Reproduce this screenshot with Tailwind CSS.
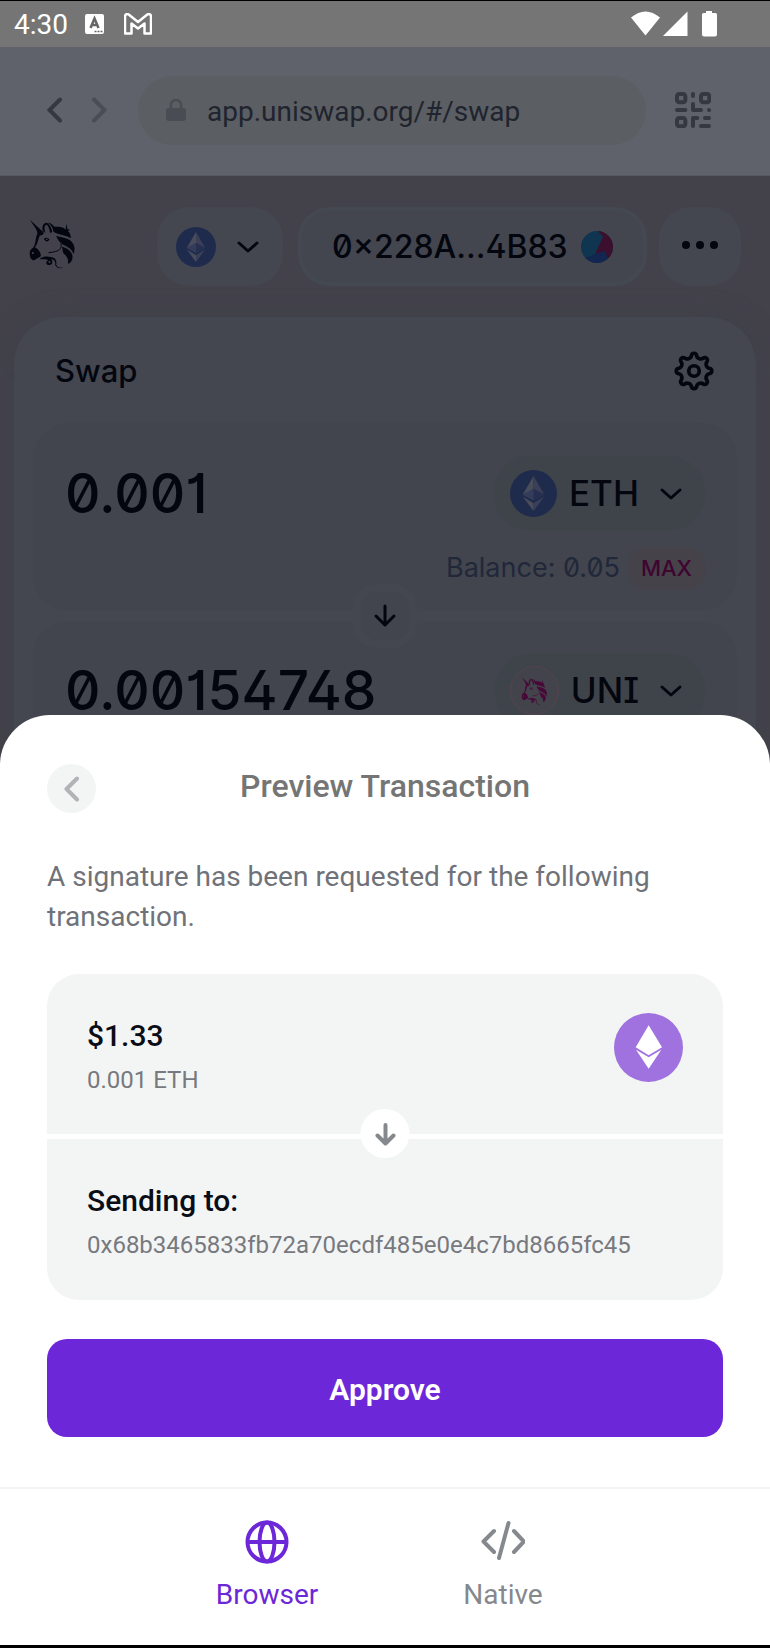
<!DOCTYPE html>
<html lang="en">
<head>
<meta charset="utf-8">
<meta name="viewport" content="width=device-width, initial-scale=1">
<title>Preview Transaction</title>
<script src="https://cdn.jsdelivr.net/npm/@tailwindcss/browser@4"></script>
</head>
<body class="bg-black font-[Roboto,sans-serif]">

<svg class="hidden" aria-hidden="true">
  <symbol id="unicorn" viewBox="88 116 140 150">
    <path fill="currentColor" d="M90 118L131 156Q134 160 127 164L119 166L113 161Q113 153 108 145Z"/>
    <path fill="currentColor" d="M129 152C125 139 131 127 140 127C150 131 156 143 157 155L151 158C149 145 145 134 139 133C134 135 132 144 137 158Z"/>
    <path fill="currentColor" d="M112 160L120 166C115 175 114 190 105 201C112 203 124 215 123 228L103 240C96 241 90 233 90 222C88 212 94 205 100 202C108 191 107 173 112 160Z"/>
    <path fill="currentColor" d="M132 176Q140 168 149 177Q147 185 138 183Z"/>
    <path fill="currentColor" d="M144 127C155 127 159 135 164 139C174 139 190 138 197 148L200 130L203 147L211 148L204 152C211 157 213 165 213 174C199 163 178 165 161 154C159 142 153 131 144 127Z"/>
    <path fill="currentColor" d="M169 166C184 172 210 171 220 190C226 201 225 210 221 222C218 206 205 200 190 193C180 187 173 178 169 166Z"/>
    <path fill="currentColor" d="M187 199C200 202 219 214 218 230C218 240 212 249 204 250C207 239 202 228 192 220C188 214 188 207 187 199Z"/>
    <path fill="none" stroke="currentColor" stroke-width="3" d="M183 190C187 204 181 214 146 217"/>
    <path fill="currentColor" d="M119 236C132 227 145 228 156 231C169 233 171 244 169 253C173 262 182 264 190 260C183 267 170 264 166 253C168 242 162 238 154 237C162 245 156 256 145 254C136 251 139 240 146 240C137 234 128 238 119 236Z"/>
    <circle cx="149" cy="245" r="3" fill="#43464e"/>
    <circle cx="99" cy="218" r="3" fill="#43464e"/><circle cx="141" cy="177" r="2" fill="#66696f"/>
  </symbol>
  <symbol id="eth" viewBox="0 0 48 48">
    <circle cx="24" cy="24" r="24" fill="#1f2b4c"/>
    <path fill="#494c59" d="M24 6L13 25L24 31Z"/><path fill="#3b4058" d="M24 6L35 25L24 31Z"/>
    <path fill="#343c5b" d="M13 25L24 19V31Z"/><path fill="#262f50" d="M24 19L35 25L24 31Z"/>
    <path fill="#494c59" d="M13 27L24 34V42Z"/><path fill="#3b4058" d="M35 27L24 34V42Z"/>
  </symbol>
  <symbol id="chevron" viewBox="0 0 24 16">
    <path fill="none" stroke="currentColor" stroke-width="3" stroke-linecap="round" stroke-linejoin="round" d="M3 4L12 12L21 4"/>
  </symbol>
</svg>

<div class="flex flex-col overflow-hidden pt-px pb-1">

  <div class="flex h-[46px] items-center bg-[#757575] pr-[53px] pl-[14px] text-white">
    <span class="pt-0.5 text-[28px] leading-none">4:30</span>
    <svg class="ml-[17px] h-5 w-[19px]" viewBox="0 0 19 20">
      <rect width="19" height="20" rx="2" fill="#fff"/>
      <path d="M5.500 14L9.500 4.500L13.500 14M7 11H12" fill="none" stroke="#666" stroke-width="2.500"/>
      <path d="M9.500 17.500h2m1 0h2m1 0h2" stroke="#666" stroke-width="1.500"/>
    </svg>
    <svg class="ml-5 h-[22px] w-7" viewBox="0 0 28 22">
      <path d="M1 3.500C1 1 3.500 0.500 5 1.800L14 9L23 1.800C24.500 0.500 27 1 27 3.500V20.500H20.500V10.500L14 15.500L7.500 10.500V20.500H1Z" fill="none" stroke="#fff" stroke-width="2.500" stroke-linejoin="round"/>
    </svg>
    <svg class="ml-auto h-[26px] w-[86px]" viewBox="0 0 86 26" fill="#fff">
      <path d="M0 6.500Q14.500 -5.500 29 6.500L14.500 24.500Z"/>
      <path d="M32 25L56.500 .500V25Z"/>
      <path d="M75 0h6v2h3.500q1.500 0 1.500 1.500v20q0 2-2 2H73q-2 0-2-2v-20Q71 2 72.500 2H75Z"/>
    </svg>
  </div>

  <header class="flex h-[129px] items-center border-b border-[#57595f] bg-[#5f626a] pr-[59px] pb-0.5 pl-[47px] text-[#35383f]">
    <button aria-label="Back"><svg class="block h-[26px] w-4" viewBox="0 0 16 26"><path d="M13 2.500L2.500 13L13 23.500" fill="none" stroke="#35383f" stroke-width="4" stroke-linecap="round"/></svg></button>
    <button aria-label="Forward" class="ml-7"><svg class="block h-[26px] w-4" viewBox="0 0 16 26"><path d="M3 2.500L13.500 13L3 23.500" fill="none" stroke="#4a4d54" stroke-width="4" stroke-linecap="round"/></svg></button>
    <div class="ml-[31px] flex h-[69px] min-w-0 flex-1 items-center rounded-full bg-[#5b5e62] pr-6 pl-7">
      <svg class="h-[22px] w-5 shrink-0" viewBox="0 0 20 22"><path d="M5 10V6a5 5 0 0 1 10 0v4" fill="none" stroke="#494c53" stroke-width="2.500"/><rect y="9" width="20" height="13" rx="3" fill="#494c53"/></svg>
      <input aria-label="Address" value="app.uniswap.org/#/swap" class="ml-[21px] w-full min-w-0 bg-transparent pt-1 text-[28px] text-[#20242e] outline-none">
    </div>
    <button aria-label="Scan code" class="ml-[29px]">
      <svg class="block size-9" viewBox="870 276 108 108" fill="none" stroke="#35383f" stroke-width="12" stroke-linecap="round" stroke-linejoin="round">
        <rect x="876" y="282" width="25" height="25" rx="7"/><rect x="948" y="282" width="25" height="25" rx="7"/><rect x="876" y="354" width="25" height="25" rx="7"/>
        <path d="M924 282v6M924 312v18h24M876 330h25M972 330h.1M924 378v-24h13M960 354h12M948 378h24"/>
      </svg>
    </button>
  </header>

  <main class="bg-[#43424b] px-[14px] pt-[31px] font-[Inter,sans-serif] text-[#03060f] [font-feature-settings:'zero','cv01','cv02','cv08','calt']">
    <div class="flex h-[79px] items-center pr-[15px] pl-[15px]">
      <a href="#" aria-label="Uniswap" class="pb-1.5"><svg class="block h-[50px] w-[47px]"><use href="#unicorn"/></svg></a>
      <button aria-label="Network" class="ml-auto flex h-full w-[126px] items-center rounded-[32px] bg-[#44474f] pl-[19px]">
        <svg class="size-10"><use href="#eth"/></svg>
        <svg class="ml-5 h-4 w-6"><use href="#chevron"/></svg>
      </button>
      <button class="ml-[15px] flex h-full w-[349px] items-center rounded-[32px] border-4 border-[#444850] bg-[#43464e] pl-[30px] text-[32px] font-medium">
        <span>0×228A...4B83</span>
        <svg class="ml-auto mr-[30px] size-8" viewBox="0 0 32 32">
          <defs><clipPath id="av"><circle cx="16" cy="16" r="16"/></clipPath></defs>
          <g clip-path="url(#av)"><path fill="#0f3551" d="M0 0h32v32H0z"/><path fill="#3b0f2d" d="M17 0L22 6L14 23L24 21L28 32H32V0Z"/><path fill="#13264f" d="M2 28L14 23L24 20L27 28L20 32H5Z"/></g>
        </svg>
      </button>
      <button aria-label="More" class="ml-3 flex h-full w-[82px] items-center justify-center rounded-[32px] bg-[#44474f]">
        <svg class="h-4 w-9" viewBox="0 0 36 16" fill="currentColor"><circle cx="4" cy="6" r="4"/><circle cx="18" cy="6" r="4"/><circle cx="32" cy="6" r="4"/></svg>
      </button>
    </div>

    <section class="mt-[31px] rounded-t-[48px] bg-[#44474f] px-[19px] shadow-[0_0_24px_#3f4048]">
      <div class="flex h-[106px] items-center justify-between px-[22px] pt-0.5">
        <h1 class="text-[31px] font-medium">Swap</h1>
        <button aria-label="Settings">
          <svg class="block size-[42px]" viewBox="-20 -20 40 40" fill="none" stroke="currentColor" stroke-width="3.500">
            <circle r="5"/>
            <path stroke-linejoin="round" d="M15.100 -2.400A2.500 2.500 0 0 1 15.100 2.400A4.100 4.100 0 0 0 12.400 9A2.500 2.500 0 0 1 9 12.400A4.100 4.100 0 0 0 2.400 15.100A2.500 2.500 0 0 1 -2.400 15.100A4.100 4.100 0 0 0 -9 12.400A2.500 2.500 0 0 1 -12.400 9A4.100 4.100 0 0 0 -15.100 2.400A2.500 2.500 0 0 1 -15.100 -2.400A4.100 4.100 0 0 0 -12.400 -9A2.500 2.500 0 0 1 -9 -12.400A4.100 4.100 0 0 0 -2.400 -15.100A2.500 2.500 0 0 1 2.400 -15.100A4.100 4.100 0 0 0 9 -12.400A2.500 2.500 0 0 1 12.400 -9A4.100 4.100 0 0 0 15.100 -2.400Z"/>
          </svg>
        </button>
      </div>

      <div class="relative">
        <div class="h-[188px] rounded-[36px] bg-[#42454d] pt-[33px] pr-8 pl-8">
          <div class="flex items-center">
            <input aria-label="Amount to pay" value="0.001" class="w-0 min-w-0 flex-1 bg-transparent text-[55px] leading-[75px] font-medium outline-none">
            <button class="flex h-[75px] items-center rounded-[36px] bg-[#3f444b] pr-[22px] pl-4 text-[35px] font-medium">
              <svg class="size-[47px]"><use href="#eth"/></svg>
              <span class="ml-3">ETH</span>
              <svg class="ml-5 h-4 w-6"><use href="#chevron"/></svg>
            </button>
          </div>
          <div class="mt-4 flex items-center justify-end">
            <span class="text-[27px] text-[#21283a]">Balance: 0.05</span>
            <button class="ml-2 h-[43px] rounded-[20px] bg-[#454249] px-[13px] text-[22px] font-medium text-[#3f0430]">MAX</button>
          </div>
        </div>
        <button aria-label="Switch tokens" class="absolute top-[161px] left-1/2 flex size-16 -translate-x-1/2 items-center justify-center rounded-[24px] border-8 border-[#44474f] bg-[#42454d]">
          <svg class="size-6" viewBox="0 0 24 24"><path d="M12 2V21M3 12L12 21L21 12" fill="none" stroke="currentColor" stroke-width="3" stroke-linecap="round" stroke-linejoin="round"/></svg>
        </button>
        <div class="mt-[10px] h-[144px] rounded-t-[36px] bg-[#42454d] px-8 pt-8">
          <div class="flex items-center">
            <input aria-label="Amount to receive" value="0.00154748" class="w-0 min-w-0 flex-1 bg-transparent text-[55px] leading-[75px] font-medium outline-none">
            <button class="flex h-[75px] items-center rounded-[36px] bg-[#3f444b] pr-[22px] pl-[15px] text-[35px] font-medium">
              <span class="flex size-[49px] items-center justify-center rounded-full border border-[#55434f] bg-[#43434b] text-[#470738]"><svg class="h-7 w-[27px]"><use href="#unicorn"/></svg></span>
              <span class="ml-3">UNI</span>
              <svg class="ml-5 h-4 w-6"><use href="#chevron"/></svg>
            </button>
          </div>
        </div>
      </div>
    </section>
  </main>

  <section role="dialog" aria-labelledby="title" class="relative -mt-[50px] rounded-t-[50px] bg-white px-[47px] pt-[49px] pb-[50px]">
    <div class="grid grid-cols-[49px_1fr_49px] items-center">
      <button aria-label="Go back" class="flex size-[49px] items-center justify-center rounded-full bg-[#f3f5f5]">
        <svg class="h-[26px] w-4" viewBox="0 0 16 26"><path d="M13 2.500L2.500 13L13 23.500" fill="none" stroke="#b1b3b6" stroke-width="4" stroke-linecap="round" stroke-linejoin="round"/></svg>
      </button>
      <h2 id="title" class="pb-1 text-center text-[32px] leading-[45px] font-medium text-[#757575]">Preview Transaction</h2>
    </div>
    <p class="mt-[44px] text-[28px] leading-10 text-[#6f7278]">A signature has been requested for the following transaction.</p>

    <div class="relative mt-[37px] flex flex-col gap-[5px]">
      <div class="flex h-[160px] items-start justify-between rounded-t-[32px] bg-[#f3f5f5] pt-[39px] pr-10 pl-10">
        <div>
          <p class="text-[30px] leading-[45px] font-medium text-[#0a0d16]">$1.33</p>
          <p class="text-[24px] leading-[45px] text-[#77797e]">0.001 ETH</p>
        </div>
        <svg class="size-[69px]" viewBox="687 159 207 207"><circle cx="790.500" cy="262.500" r="103.500" fill="#a072df"/><path fill="#fff" d="M791 196L831 262L791 286L752 262ZM753 269L791 292L829 269L791 326Z"/></svg>
      </div>
      <div class="h-[161px] rounded-b-[32px] bg-[#f3f5f5] px-10 pt-[39px]">
        <p class="text-[30px] leading-[45px] font-medium text-[#0a0d16]">Sending to:</p>
        <p class="text-[24px] leading-[45px] text-[#77797e]">0x68b3465833fb72a70ecdf485e0e4c7bd8665fc45</p>
      </div>
      <span class="absolute top-[135px] left-1/2 flex size-[49px] -translate-x-1/2 items-center justify-center rounded-full bg-white">
        <svg class="size-6" viewBox="0 0 24 24"><path d="M12 3V21M4 13.500L12 21.500L20 13.500" fill="none" stroke="#85898d" stroke-width="4" stroke-linecap="round" stroke-linejoin="round"/></svg>
      </span>
    </div>

    <button class="mt-[39px] h-[98px] w-full rounded-[20px] bg-[#6c27d9] pt-0.5 text-[30px] font-semibold text-white">Approve</button>
  </section>

  <nav class="flex h-[158px] justify-center border-t-2 border-[#f3f4f5] bg-white pt-[31px] text-[28px]">
    <a href="#" class="flex w-[236px] flex-col items-center text-[#6c27d9]">
      <svg class="size-[44px]" viewBox="0 0 44 44" fill="none" stroke="currentColor" stroke-width="4"><circle cx="22" cy="22" r="19.500"/><ellipse cx="22" cy="22" rx="7.500" ry="19.500"/><path d="M3 22H41"/></svg>
      <span class="mt-[11px] leading-10">Browser</span>
    </a>
    <a href="#" class="flex w-[236px] flex-col items-center text-[#85888d]">
      <svg class="size-[44px]" viewBox="0 0 44 44" fill="none" stroke="currentColor" stroke-width="4" stroke-linecap="round" stroke-linejoin="round"><path d="M13 11L2.500 21.500L13 32M33 11L43 21.500L33 32M27.500 3L18 38"/></svg>
      <span class="mt-[11px] leading-10">Native</span>
    </a>
  </nav>
</div>
</body>
</html>
